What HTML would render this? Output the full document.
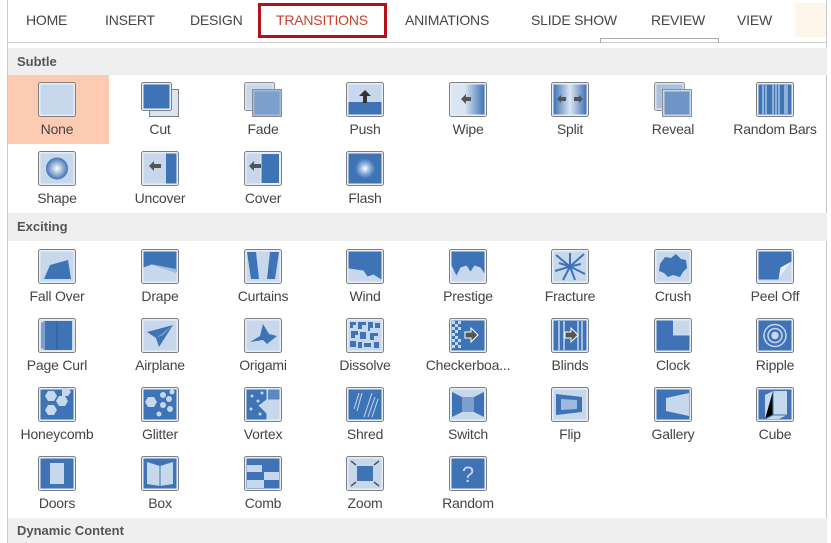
<!DOCTYPE html>
<html><head><meta charset="utf-8"><style>
*{margin:0;padding:0;box-sizing:border-box}
body{width:831px;height:543px;background:#fff;position:relative;overflow:hidden;font-family:"Liberation Sans",sans-serif;color:#444}
.tab{position:absolute;top:12px;font-size:14px;color:#444;letter-spacing:-0.2px}
.hdr{position:absolute;left:8px;right:4px;background:#efefef;font-size:13px;font-weight:bold;color:#555;padding-left:9px}
.c{position:absolute;width:102px;height:69px;text-align:center}
.c svg{position:absolute;left:32px;top:7px}
.c span{position:absolute;left:0;right:0;top:46px;font-size:14px;color:#444;white-space:nowrap;letter-spacing:-0.2px}
</style></head><body>
<div style="position:absolute;left:7px;top:0;width:1px;height:543px;background:#c8c8c8"></div>
<div style="position:absolute;left:826px;top:0;width:1px;height:543px;background:#c8c8c8"></div>
<div style="position:absolute;left:7px;top:42px;width:820px;height:1px;background:#cfcfcf"></div>
<div style="position:absolute;left:600px;top:38px;width:119px;height:5px;border:1px solid #aaa;border-bottom:none"></div>
<div style="position:absolute;left:795px;top:3px;width:31px;height:34px;background:#fdf4ea"></div>
<div class="tab" style="left:26px">HOME</div>
<div class="tab" style="left:105px">INSERT</div>
<div class="tab" style="left:190px">DESIGN</div>
<div style="position:absolute;left:258px;top:3px;width:129px;height:35px;border:3px solid #b3121c"></div>
<div class="tab" style="left:276px;color:#c4422f">TRANSITIONS</div>
<div class="tab" style="left:405px">ANIMATIONS</div>
<div class="tab" style="left:531px">SLIDE SHOW</div>
<div class="tab" style="left:651px">REVIEW</div>
<div class="tab" style="left:737px">VIEW</div>

<div class="hdr" style="top:48px;height:27px;line-height:27px">Subtle</div>
<div class="hdr" style="top:213px;height:28px;line-height:28px">Exciting</div>
<div class="hdr" style="top:518px;height:25px;line-height:25px">Dynamic Content</div>

<div style="position:absolute;left:8px;top:75px;width:101px;height:69px;background:#fccbb2"></div>

<!-- row 1 -->
<div class="c" style="left:6px;top:75px"><svg width="38" height="35"><rect x=".5" y=".5" width="37" height="34" rx="2" fill="#e8eef6" stroke="#7f7f7f"/><rect x="2.5" y="2.5" width="33" height="30" fill="#c8d8ec"/></svg><span>None</span></div>
<div class="c" style="left:109px;top:75px"><svg width="38" height="35"><rect x="8.5" y="7.5" width="29" height="27" fill="#dbe5f1" stroke="#7f7f7f"/><rect x=".5" y=".5" width="30" height="28" rx="2" fill="#e8eef6" stroke="#7f7f7f"/><rect x="2.5" y="2.5" width="26" height="24" fill="#3e73b5"/></svg><span>Cut</span></div>
<div class="c" style="left:212px;top:75px"><svg width="38" height="35"><rect x=".5" y=".5" width="30" height="28" rx="2" fill="#dbe5f1" stroke="#8f8f8f"/><rect x="2.5" y="2.5" width="26" height="24" fill="#c8d8ec"/><rect x="8.5" y="7.5" width="29" height="27" fill="#9fb9da" stroke="#8f8f8f"/><rect x="10.5" y="9.5" width="25" height="23" fill="#7c9fcc"/></svg><span>Fade</span></div>
<div class="c" style="left:314px;top:75px"><svg width="38" height="35"><rect x=".5" y=".5" width="37" height="34" rx="2" fill="#e8eef6" stroke="#7f7f7f"/><rect x="2.5" y="2.5" width="33" height="30" fill="#c8d8ec"/><rect x="2.5" y="20" width="33" height="12.5" fill="#3e73b5"/><path d="M19 8l-6 6h4v7h4v-7h4z" fill="#333"/></svg><span>Push</span></div>
<div class="c" style="left:417px;top:75px"><svg width="38" height="35"><defs><linearGradient id="gw"><stop offset="0.4" stop-color="#dbe5f1"/><stop offset="1" stop-color="#3e73b5"/></linearGradient></defs><rect x=".5" y=".5" width="37" height="34" rx="2" fill="#e8eef6" stroke="#7f7f7f"/><rect x="2.5" y="2.5" width="33" height="30" fill="url(#gw)"/><path d="M12 17l5-5v3h5v4h-5v3z" fill="#555"/></svg><span>Wipe</span></div>
<div class="c" style="left:519px;top:75px"><svg width="38" height="35"><defs><linearGradient id="gs"><stop offset="0" stop-color="#3e73b5"/><stop offset="0.5" stop-color="#dbe5f1"/><stop offset="1" stop-color="#3e73b5"/></linearGradient></defs><rect x=".5" y=".5" width="37" height="34" rx="2" fill="#e8eef6" stroke="#7f7f7f"/><rect x="2.5" y="2.5" width="33" height="30" fill="url(#gs)"/><path d="M6 17l4-4v2h5v4h-5v2zM32 17l-4-4v2h-5v4h5v2z" fill="#555"/></svg><span>Split</span></div>
<div class="c" style="left:622px;top:75px"><svg width="38" height="35"><rect x=".5" y=".5" width="30" height="28" rx="2" fill="#dbe5f1" stroke="#8f8f8f"/><rect x="2.5" y="2.5" width="26" height="24" fill="#a9c1df"/><rect x="8.5" y="7.5" width="29" height="27" fill="#c8d8ec" stroke="#8f8f8f"/><rect x="10.5" y="9.5" width="25" height="23" fill="#6f95c7"/></svg><span>Reveal</span></div>
<div class="c" style="left:724px;top:75px"><svg width="38" height="35"><rect x=".5" y=".5" width="37" height="34" rx="2" fill="#e8eef6" stroke="#7f7f7f"/><rect x="2.5" y="2.5" width="33" height="30" fill="#3e73b5"/><path d="M7 3v29M10 3v29M17 3v29M20 3v29M23 3v29M29 3v29M31 3v29" stroke="#c8d8ec" stroke-width="1.2"/></svg><span>Random Bars</span></div>
<!-- row 2 -->
<div class="c" style="left:6px;top:144px"><svg width="38" height="35"><defs><radialGradient id="gr"><stop offset="0" stop-color="#fff"/><stop offset="1" stop-color="#3e73b5"/></radialGradient></defs><rect x=".5" y=".5" width="37" height="34" rx="2" fill="#e8eef6" stroke="#7f7f7f"/><rect x="2.5" y="2.5" width="33" height="30" fill="#c8d8ec"/><circle cx="19" cy="17.5" r="11" fill="url(#gr)"/></svg><span>Shape</span></div>
<div class="c" style="left:109px;top:144px"><svg width="38" height="35"><rect x=".5" y=".5" width="37" height="34" rx="2" fill="#e8eef6" stroke="#7f7f7f"/><rect x="2.5" y="2.5" width="33" height="30" fill="#c8d8ec"/><rect x="25" y="2.5" width="10.5" height="30" fill="#3e73b5"/><path d="M8 15l5-5v3h7v4h-7v3z" fill="#555"/></svg><span>Uncover</span></div>
<div class="c" style="left:212px;top:144px"><svg width="38" height="35"><rect x=".5" y=".5" width="37" height="34" rx="2" fill="#e8eef6" stroke="#7f7f7f"/><rect x="2.5" y="2.5" width="33" height="30" fill="#c8d8ec"/><rect x="17" y="2.5" width="18.5" height="30" fill="#3e73b5" stroke="#e8eef6"/><path d="M5 15l5-5v3h7v4h-7v3z" fill="#555"/></svg><span>Cover</span></div>
<div class="c" style="left:314px;top:144px"><svg width="38" height="35"><defs><radialGradient id="gf"><stop offset="0" stop-color="#fff"/><stop offset=".5" stop-color="#8fb0dc"/><stop offset="1" stop-color="#3e73b5"/></radialGradient></defs><rect x=".5" y=".5" width="37" height="34" rx="2" fill="#e8eef6" stroke="#7f7f7f"/><rect x="2.5" y="2.5" width="33" height="30" fill="#3e73b5"/><circle cx="19" cy="17.5" r="10" fill="url(#gf)"/></svg><span>Flash</span></div>

<!-- Exciting row 1 -->
<div class="c" style="left:6px;top:242px"><svg width="38" height="35"><rect x=".5" y=".5" width="37" height="34" rx="2" fill="#e8eef6" stroke="#7f7f7f"/><rect x="2.5" y="2.5" width="33" height="30" fill="#c8d8ec"/><path d="M6 30l6-14 18-5 3 19z" fill="#3e73b5"/></svg><span>Fall Over</span></div>
<div class="c" style="left:109px;top:242px"><svg width="38" height="35"><rect x=".5" y=".5" width="37" height="34" rx="2" fill="#e8eef6" stroke="#7f7f7f"/><rect x="2.5" y="2.5" width="33" height="30" fill="#c8d8ec"/><path d="M2.5 2.5h33v21l-25-8-8 3z" fill="#3e73b5"/><path d="M10 15l25 9v-4z" fill="#9fb9da"/></svg><span>Drape</span></div>
<div class="c" style="left:212px;top:242px"><svg width="38" height="35"><rect x=".5" y=".5" width="37" height="34" rx="2" fill="#e8eef6" stroke="#7f7f7f"/><rect x="2.5" y="2.5" width="33" height="30" fill="#c8d8ec"/><path d="M3 3h9l3 27h-8zM35 3h-9l-3 27h8z" fill="#3e73b5"/></svg><span>Curtains</span></div>
<div class="c" style="left:314px;top:242px"><svg width="38" height="35"><rect x=".5" y=".5" width="37" height="34" rx="2" fill="#e8eef6" stroke="#7f7f7f"/><rect x="2.5" y="2.5" width="33" height="30" fill="#c8d8ec"/><path d="M2.5 2.5h33v28l-8-5-6 2-4-6-15-2z" fill="#3e73b5"/></svg><span>Wind</span></div>
<div class="c" style="left:417px;top:242px"><svg width="38" height="35"><rect x=".5" y=".5" width="37" height="34" rx="2" fill="#e8eef6" stroke="#7f7f7f"/><rect x="2.5" y="2.5" width="33" height="30" fill="#c8d8ec"/><path d="M2.5 2.5h33v22l-4-6-6-2-4 6-4-6-6 2-4 8-5-10z" fill="#3e73b5"/></svg><span>Prestige</span></div>
<div class="c" style="left:519px;top:242px"><svg width="38" height="35"><rect x=".5" y=".5" width="37" height="34" rx="2" fill="#e8eef6" stroke="#7f7f7f"/><rect x="2.5" y="2.5" width="33" height="30" fill="#c8d8ec"/><path d="M19 17.5L5 6M19 17.5L33 5M19 17.5L4 22M19 17.5L34 25M19 17.5L12 31M19 17.5L24 31M19 17.5L19 4M19 17.5L30 15M19 17.5L8 14" stroke="#3e73b5" stroke-width="2"/></svg><span>Fracture</span></div>
<div class="c" style="left:622px;top:242px"><svg width="38" height="35"><rect x=".5" y=".5" width="37" height="34" rx="2" fill="#e8eef6" stroke="#7f7f7f"/><rect x="2.5" y="2.5" width="33" height="30" fill="#c8d8ec"/><path d="M6 15l5-7 6 1 5-4 5 5 5 1 1 8-4 4-3 5-7-2-5 2-4-4-5-2z" fill="#3e73b5"/></svg><span>Crush</span></div>
<div class="c" style="left:724px;top:242px"><svg width="38" height="35"><rect x=".5" y=".5" width="37" height="34" rx="2" fill="#e8eef6" stroke="#7f7f7f"/><rect x="2.5" y="2.5" width="33" height="30" fill="#c8d8ec"/><path d="M2.5 2.5h33v10l-13 18h-20z" fill="#3e73b5"/><path d="M35.5 12.5l-13 18 2-12z" fill="#e8eef6"/></svg><span>Peel Off</span></div>
<!-- Exciting row 2 -->
<div class="c" style="left:6px;top:311px"><svg width="38" height="35"><rect x=".5" y=".5" width="37" height="34" rx="2" fill="#e8eef6" stroke="#7f7f7f"/><rect x="2.5" y="2.5" width="33" height="30" fill="#c8d8ec"/><path d="M7 3h27v29h-27z" fill="#3e73b5"/><path d="M7 3l-4 2v25l4 2z" fill="#7c9fcc"/><path d="M19 3v29" stroke="#2d5a94"/></svg><span>Page Curl</span></div>
<div class="c" style="left:109px;top:311px"><svg width="38" height="35"><rect x=".5" y=".5" width="37" height="34" rx="2" fill="#e8eef6" stroke="#7f7f7f"/><rect x="2.5" y="2.5" width="33" height="30" fill="#c8d8ec"/><path d="M6 14l26-7-14 22-3-9z" fill="#3e73b5"/><path d="M15 20l17-13-10 10z" fill="#7c9fcc"/></svg><span>Airplane</span></div>
<div class="c" style="left:212px;top:311px"><svg width="38" height="35"><rect x=".5" y=".5" width="37" height="34" rx="2" fill="#e8eef6" stroke="#7f7f7f"/><rect x="2.5" y="2.5" width="33" height="30" fill="#c8d8ec"/><path d="M6 24l10-6 3-12 6 10 8 2-10 8-4-4z" fill="#3e73b5"/></svg><span>Origami</span></div>
<div class="c" style="left:314px;top:311px"><svg width="38" height="35"><rect x=".5" y=".5" width="37" height="34" rx="2" fill="#e8eef6" stroke="#7f7f7f"/><rect x="2.5" y="2.5" width="33" height="30" fill="#c8d8ec"/><path d="M4 4h6v3h-3v3h-3zM12 4h8v3h-4v4h-4zM22 4h5v6h-3v3h-2zM29 5h5v5h-5zM5 13h7v4h-3v3h-4zM14 14h6v7h-6zM24 15h8v3h-4v4h-4zM4 23h6v6h-6zM12 24h4v6h-4zM18 25h7v4h-7zM28 24h5v6h-5z" fill="#3e73b5"/></svg><span>Dissolve</span></div>
<div class="c" style="left:417px;top:311px"><svg width="38" height="35"><rect x=".5" y=".5" width="37" height="34" rx="2" fill="#e8eef6" stroke="#7f7f7f"/><rect x="2.5" y="2.5" width="33" height="30" fill="#3e73b5"/><path d="M3 3h3v3h-3zM6 6h3v3h-3zM3 9h3v3h-3zM6 12h3v3h-3zM3 15h3v3h-3zM6 18h3v3h-3zM3 21h3v3h-3zM6 24h3v3h-3zM3 27h3v3h-3zM9 3h3v3h-3zM9 9h3v3h-3zM9 21h3v3h-3zM9 27h3v3h-3z" fill="#c8d8ec"/><path d="M16 14h6v-4l7 7-7 7v-4h-6z" fill="#555" stroke="#fff"/></svg><span>Checkerboa...</span></div>
<div class="c" style="left:519px;top:311px"><svg width="38" height="35"><rect x=".5" y=".5" width="37" height="34" rx="2" fill="#e8eef6" stroke="#7f7f7f"/><rect x="2.5" y="2.5" width="33" height="30" fill="#3e73b5"/><path d="M8 3v29M13 3v29M27 3v29M31 3v29" stroke="#c8d8ec" stroke-width="1.5"/><path d="M14 14h6v-4l7 7-7 7v-4h-6z" fill="#555" stroke="#fff"/></svg><span>Blinds</span></div>
<div class="c" style="left:622px;top:311px"><svg width="38" height="35"><rect x=".5" y=".5" width="37" height="34" rx="2" fill="#e8eef6" stroke="#7f7f7f"/><rect x="2.5" y="2.5" width="33" height="30" fill="#3e73b5"/><path d="M19 2.5h16.5v15h-16.5z" fill="#c8d8ec"/></svg><span>Clock</span></div>
<div class="c" style="left:724px;top:311px"><svg width="38" height="35"><rect x=".5" y=".5" width="37" height="34" rx="2" fill="#e8eef6" stroke="#7f7f7f"/><rect x="2.5" y="2.5" width="33" height="30" fill="#3e73b5"/><g fill="none" stroke="#c8d8ec" stroke-width="1.5"><circle cx="19" cy="17.5" r="11"/><circle cx="19" cy="17.5" r="7"/><circle cx="19" cy="17.5" r="3" fill="#c8d8ec"/></g></svg><span>Ripple</span></div>
<!-- Exciting row 3 -->
<div class="c" style="left:6px;top:380px"><svg width="38" height="35"><rect x=".5" y=".5" width="37" height="34" rx="2" fill="#e8eef6" stroke="#7f7f7f"/><rect x="2.5" y="2.5" width="33" height="30" fill="#3e73b5"/><g fill="#c8d8ec"><path d="M10 4h6l3 5-3 5h-6l-3-5z"/><path d="M21 9h6l3 5-3 5h-6l-3-5z"/><path d="M10 18h6l3 5-3 5h-6l-3-5z"/><path d="M24 1h6l3 4-3 4h-6z"/></g></svg><span>Honeycomb</span></div>
<div class="c" style="left:109px;top:380px"><svg width="38" height="35"><rect x=".5" y=".5" width="37" height="34" rx="2" fill="#e8eef6" stroke="#7f7f7f"/><rect x="2.5" y="2.5" width="33" height="30" fill="#3e73b5"/><g fill="#c8d8ec"><path d="M7 10h6l3 5-3 5h-6l-3-5z"/><circle cx="22" cy="8" r="3"/><circle cx="28" cy="12" r="3"/><circle cx="22" cy="18" r="3"/><circle cx="29" cy="22" r="3"/><circle cx="18" cy="27" r="2.5"/><circle cx="31" cy="5" r="2.5"/></g></svg><span>Glitter</span></div>
<div class="c" style="left:212px;top:380px"><svg width="38" height="35"><rect x=".5" y=".5" width="37" height="34" rx="2" fill="#e8eef6" stroke="#7f7f7f"/><rect x="2.5" y="2.5" width="33" height="30" fill="#c8d8ec"/><path d="M2.5 2.5h20v10l-8 6 8 8v6h-20z" fill="#3e73b5"/><path d="M24 2.5h11.5v10h-11.5z" fill="#5a88c2"/><g fill="#c8d8ec"><circle cx="8" cy="9" r="1.5"/><circle cx="14" cy="14" r="1.5"/><circle cx="7" cy="22" r="1.5"/><circle cx="16" cy="27" r="1.5"/><circle cx="18" cy="6" r="1.5"/></g></svg><span>Vortex</span></div>
<div class="c" style="left:314px;top:380px"><svg width="38" height="35"><rect x=".5" y=".5" width="37" height="34" rx="2" fill="#e8eef6" stroke="#7f7f7f"/><rect x="2.5" y="2.5" width="33" height="30" fill="#3e73b5"/><path d="M8 22l5-16M11 24l5-18M18 30l8-24M22 30l7-20M26 30l6-18" stroke="#c8d8ec"/></svg><span>Shred</span></div>
<div class="c" style="left:417px;top:380px"><svg width="38" height="35"><rect x=".5" y=".5" width="37" height="34" rx="2" fill="#e8eef6" stroke="#7f7f7f"/><rect x="2.5" y="2.5" width="33" height="30" fill="#c8d8ec"/><path d="M3 5l10 5v15l-10 5zM35 5l-10 5v15l10 5z" fill="#3e73b5"/><rect x="13" y="10" width="12" height="15" fill="#7c9fcc"/></svg><span>Switch</span></div>
<div class="c" style="left:519px;top:380px"><svg width="38" height="35"><rect x=".5" y=".5" width="37" height="34" rx="2" fill="#e8eef6" stroke="#7f7f7f"/><rect x="2.5" y="2.5" width="33" height="30" fill="#c8d8ec"/><path d="M5 7l26 3v15l-26 3z" fill="#3e73b5"/><path d="M10 12l16 1v9l-16 1z" fill="#9fb9da"/></svg><span>Flip</span></div>
<div class="c" style="left:622px;top:380px"><svg width="38" height="35"><rect x=".5" y=".5" width="37" height="34" rx="2" fill="#e8eef6" stroke="#7f7f7f"/><rect x="2.5" y="2.5" width="33" height="30" fill="#3e73b5"/><path d="M12 11l23-5v23l-23-5z" fill="#c8d8ec"/></svg><span>Gallery</span></div>
<div class="c" style="left:724px;top:380px"><svg width="38" height="35"><rect x=".5" y=".5" width="37" height="34" rx="2" fill="#e8eef6" stroke="#7f7f7f"/><rect x="2.5" y="2.5" width="33" height="30" fill="#3e73b5"/><path d="M9 8l8-4h14v24l-8 4h-14z" fill="#c8d8ec"/><path d="M17 4v24l-8 4M17 28h14" stroke="#3e73b5"/></svg><span>Cube</span></div>
<!-- Exciting row 4 -->
<div class="c" style="left:6px;top:449px"><svg width="38" height="35"><rect x=".5" y=".5" width="37" height="34" rx="2" fill="#e8eef6" stroke="#7f7f7f"/><rect x="2.5" y="2.5" width="33" height="30" fill="#3e73b5"/><rect x="12" y="7" width="14" height="21" fill="#c8d8ec"/></svg><span>Doors</span></div>
<div class="c" style="left:109px;top:449px"><svg width="38" height="35"><rect x=".5" y=".5" width="37" height="34" rx="2" fill="#e8eef6" stroke="#7f7f7f"/><rect x="2.5" y="2.5" width="33" height="30" fill="#3e73b5"/><path d="M6 6l13 4v20l-13-2zM32 6l-13 4v20l13-2z" fill="#c8d8ec"/><path d="M19 10v20" stroke="#3e73b5"/></svg><span>Box</span></div>
<div class="c" style="left:212px;top:449px"><svg width="38" height="35"><rect x=".5" y=".5" width="37" height="34" rx="2" fill="#e8eef6" stroke="#7f7f7f"/><rect x="2.5" y="2.5" width="33" height="30" fill="#3e73b5"/><path d="M3 9h15v7h-15zM20 16h15v8h-15zM3 24h17v8h-17z" fill="#c8d8ec"/></svg><span>Comb</span></div>
<div class="c" style="left:314px;top:449px"><svg width="38" height="35"><rect x=".5" y=".5" width="37" height="34" rx="2" fill="#e8eef6" stroke="#7f7f7f"/><rect x="2.5" y="2.5" width="33" height="30" fill="#c8d8ec"/><rect x="11" y="10" width="16" height="15" fill="#3e73b5"/><path d="M5 5l5 4M33 5l-5 4M5 30l5-4M33 30l-5-4" stroke="#555" stroke-width="1.5"/></svg><span>Zoom</span></div>
<div class="c" style="left:417px;top:449px"><svg width="38" height="35"><rect x=".5" y=".5" width="37" height="34" rx="2" fill="#e8eef6" stroke="#7f7f7f"/><rect x="2.5" y="2.5" width="33" height="30" fill="#3e73b5"/><text x="19" y="26" text-anchor="middle" font-family="Liberation Sans,sans-serif" font-size="22" fill="#c8d8ec">?</text></svg><span>Random</span></div>
</body></html>
